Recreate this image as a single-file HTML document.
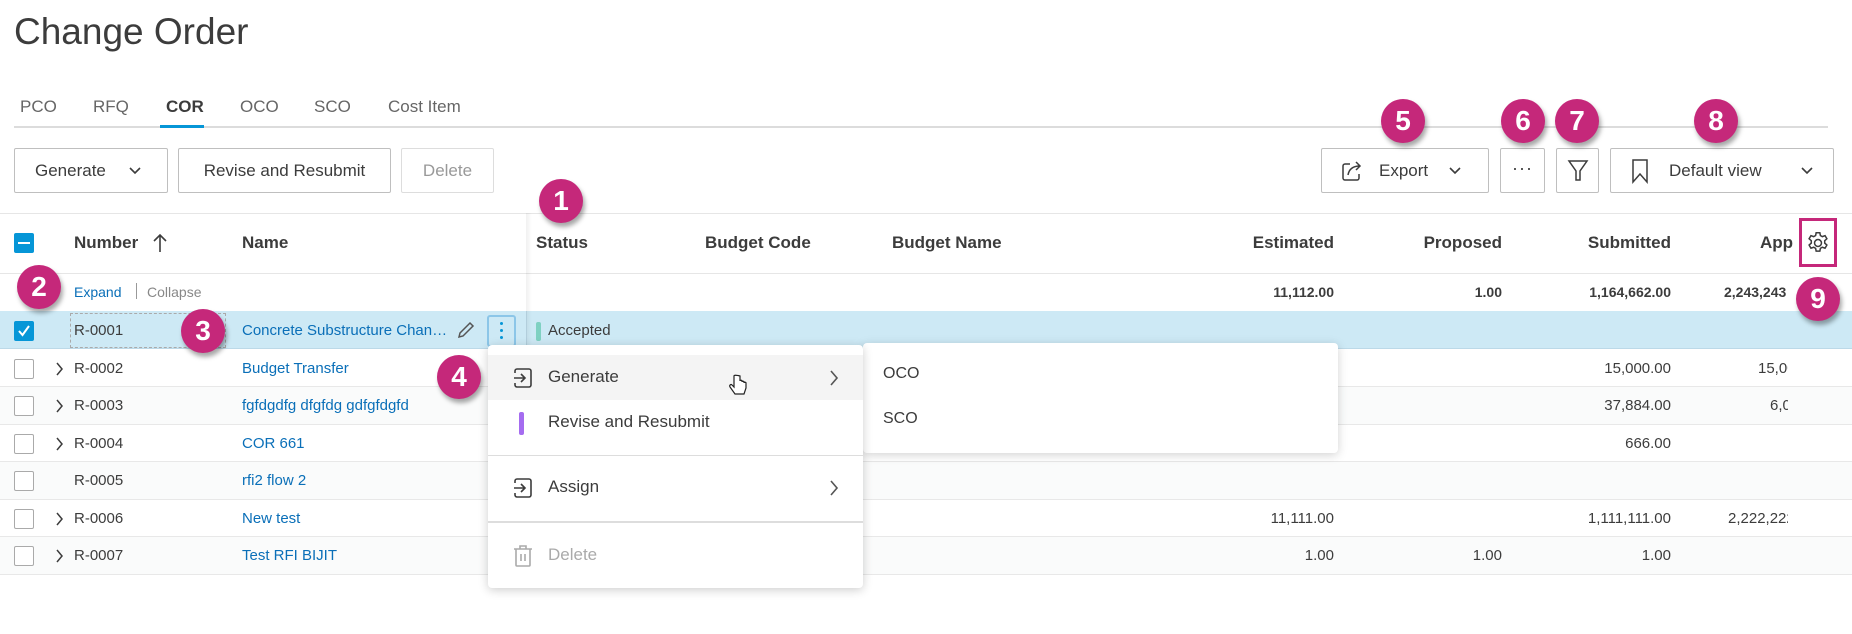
<!DOCTYPE html>
<html><head><meta charset="utf-8"><style>
*{box-sizing:border-box;margin:0;padding:0}
body{width:1852px;height:634px;overflow:hidden;background:#fff;font-family:"Liberation Sans",sans-serif;color:#3c3c3c;position:relative;font-size:15px}
.a{position:absolute;white-space:nowrap}
.btn{position:absolute;border:1px solid #bfbfbf;border-radius:2px;height:45px;top:148px;background:#fff;display:flex;align-items:center;font-size:17px;color:#3c3c3c}
.badge{position:absolute;width:44px;height:44px;border-radius:50%;background:#c5287a;color:#fff;font-size:28px;font-weight:bold;text-align:center;line-height:44px;box-shadow:2px 4px 5px rgba(0,0,0,.35);z-index:20}
.hd{position:absolute;top:233px;font-weight:bold;font-size:17px;color:#3c3c3c}
.r{text-align:right}
.cb{position:absolute;left:14px;width:20px;height:20px;border:1px solid #aaa;border-radius:2px;background:#fff}
.row{position:absolute;left:0;width:1852px;height:38px;border-bottom:1px solid #e8e8e8}
.num{position:absolute;font-size:15px;color:#3c3c3c}
.lnk{color:#0a6fb8}
.chev{position:absolute;left:56px;width:8px;height:14px}
</style></head><body>
<div class="a" style="left:14px;top:11px;font-size:37px;color:#3c3c3c">Change Order</div>
<div class="a" style="left:20px;top:97px;font-size:17px;color:#666">PCO</div>
<div class="a" style="left:93px;top:97px;font-size:17px;color:#666">RFQ</div>
<div class="a" style="left:166px;top:97px;font-size:17px;color:#3c3c3c;font-weight:bold">COR</div>
<div class="a" style="left:240px;top:97px;font-size:17px;color:#666">OCO</div>
<div class="a" style="left:314px;top:97px;font-size:17px;color:#666">SCO</div>
<div class="a" style="left:388px;top:97px;font-size:17px;color:#666">Cost Item</div>
<div class="a" style="left:14px;top:126px;width:1814px;height:2px;background:#dcdcdc"></div>
<div class="a" style="left:160px;top:125px;width:44px;height:3px;background:#0696d7"></div>

<div class="btn" style="left:14px;width:154px;padding-left:20px">Generate<svg style="margin-left:22px" width="14" height="10" viewBox="0 0 14 10"><path d="M2 2l5 5 5-5" fill="none" stroke="#3c3c3c" stroke-width="1.6"/></svg></div>
<div class="btn" style="left:178px;width:213px;justify-content:center">Revise and Resubmit</div>
<div class="btn" style="left:401px;width:93px;justify-content:center;border-color:#ddd;color:#999">Delete</div>
<div class="btn" style="left:1321px;width:168px;padding-left:18px"><svg width="24" height="24" viewBox="0 0 24 24" fill="none" stroke="#3c3c3c" stroke-width="1.5"><path d="M10 5H5a2 2 0 0 0-2 2v12a2 2 0 0 0 2 2h12a2 2 0 0 0 2-2v-4"/><path d="M8 16c1-6 5-9 12-9M16 3l4 4-4 4"/></svg><span style="margin-left:15px">Export</span><svg style="margin-left:20px" width="14" height="10" viewBox="0 0 14 10"><path d="M2 2l5 5 5-5" fill="none" stroke="#3c3c3c" stroke-width="1.6"/></svg></div>
<div class="btn" style="left:1500px;width:45px;justify-content:center;font-size:18px;letter-spacing:1px;padding-bottom:4px">···</div>
<div class="btn" style="left:1556px;width:43px;justify-content:center"><svg width="22" height="26" viewBox="0 0 22 26"><path d="M2 3h18l-7 10v9h-4v-9z" fill="none" stroke="#3c3c3c" stroke-width="1.5"/></svg></div>
<div class="btn" style="left:1610px;width:224px;padding-left:20px"><svg width="18" height="26" viewBox="0 0 18 26"><path d="M2 2h14v22l-7-8-7 8z" fill="none" stroke="#3c3c3c" stroke-width="1.5"/></svg><span style="margin-left:20px">Default view</span><svg style="margin-left:38px" width="14" height="10" viewBox="0 0 14 10"><path d="M2 2l5 5 5-5" fill="none" stroke="#3c3c3c" stroke-width="1.6"/></svg></div>

<div class="a" style="left:0;top:213px;width:1852px;height:1px;background:#e6e6e6"></div>
<div class="a" style="left:0;top:273px;width:1852px;height:1px;background:#e6e6e6"></div>
<div class="a" style="left:0;top:311px;width:1852px;height:1px;background:#e6e6e6"></div>
<div class="a" style="left:14px;top:233px;width:20px;height:20px;background:#0696d7;border-radius:2px"><div style="position:absolute;left:4px;top:9px;width:12px;height:2px;background:#fff"></div></div>
<div class="hd" style="left:74px">Number</div>
<svg class="a" style="left:151px;top:232px" width="18" height="22" viewBox="0 0 18 22"><path d="M9 20V3M3 9l6-6 6 6" fill="none" stroke="#3c3c3c" stroke-width="1.6"/></svg>
<div class="hd" style="left:242px">Name</div>
<div class="hd" style="left:536px">Status</div>
<div class="hd" style="left:705px">Budget Code</div>
<div class="hd" style="left:892px">Budget Name</div>
<div class="hd r" style="left:1200px;width:134px">Estimated</div>
<div class="hd r" style="left:1370px;width:132px">Proposed</div>
<div class="hd r" style="left:1540px;width:131px">Submitted</div>
<div class="hd" style="left:1760px;width:35px;overflow:hidden">App</div>
<div class="a" style="left:1799px;top:218px;width:38px;height:49px;border:3px solid #c5287a"></div>
<svg class="a" style="left:1805px;top:230px" width="26" height="26" viewBox="0 0 24 24" fill="none" stroke="#3c3c3c" stroke-width="1.4"><circle cx="12" cy="12" r="3.2"/><path d="M10.3 2.5h3.4l.5 2.6 1.8 1 2.5-.9 1.7 2.9-2 1.8v2.2l2 1.8-1.7 2.9-2.5-.9-1.8 1-.5 2.6h-3.4l-.5-2.6-1.8-1-2.5.9-1.7-2.9 2-1.8v-2.2l-2-1.8 1.7-2.9 2.5.9 1.8-1z"/></svg>

<div class="a lnk" style="left:74px;top:284px;font-size:14px">Expand</div>
<div class="a" style="left:136px;top:283px;width:1px;height:16px;background:#999"></div>
<div class="a" style="left:147px;top:284px;font-size:14px;color:#888">Collapse</div>
<div class="num r" style="left:1200px;width:134px;top:284px;font-weight:bold;font-size:14px">11,112.00</div>
<div class="num r" style="left:1370px;width:132px;top:284px;font-weight:bold;font-size:14px">1.00</div>
<div class="num r" style="left:1540px;width:131px;top:284px;font-weight:bold;font-size:14px">1,164,662.00</div>
<div class="num" style="left:1724px;width:64px;overflow:hidden;top:284px;font-weight:bold;font-size:14px">2,243,243</div>

<div class="row" style="top:311px;background:#cde9f5;border-bottom-color:#bcd9e8"></div>
<div class="a" style="left:14px;top:321px;width:20px;height:20px;background:#0696d7;border-radius:2px"><svg width="20" height="20" viewBox="0 0 20 20"><path d="M5 10l3.5 4L15 5" fill="none" stroke="#fff" stroke-width="2"/></svg></div>
<div class="a" style="left:70px;top:313px;width:156px;height:35px;border:1px dashed #aaa"></div>
<div class="num" style="left:74px;top:322px">R-0001</div>
<div class="num lnk" style="left:242px;top:322px">Concrete Substructure Chan…</div>
<svg class="a" style="left:455px;top:319px" width="22" height="22" viewBox="0 0 22 22"><path d="M4 18l1-4L15 4l3 3L8 17z" fill="none" stroke="#555" stroke-width="1.5"/></svg>
<div class="a" style="left:487px;top:315px;width:29px;height:32px;border:2px solid #8cc6e8;border-radius:3px"><div style="position:absolute;left:11px;top:5px;width:3px;height:3px;background:#0696d7;border-radius:50%;box-shadow:0 7px 0 #0696d7,0 14px 0 #0696d7"></div></div>
<div class="a" style="left:526px;top:311px;width:1px;height:38px;background:#bcd9e8"></div>
<div class="a" style="left:536px;top:322px;width:5px;height:19px;background:#7fd1c2;border-radius:2px"></div>
<div class="num" style="left:548px;top:322px">Accepted</div>

<div class="row" style="top:349px"></div>
<div class="row" style="top:387px;background:#fafbfb"></div>
<div class="row" style="top:424px"></div>
<div class="row" style="top:462px;background:#fafbfb"></div>
<div class="row" style="top:499px"></div>
<div class="row" style="top:537px;background:#fafbfb"></div>
<div class="a" style="left:526px;top:213px;width:6px;height:361px;background:linear-gradient(90deg,rgba(0,0,0,.06),rgba(0,0,0,0))"></div>

<div class="cb" style="top:359px"></div><svg class="chev" style="top:362px" viewBox="0 0 8 14"><path d="M1 1l5 6-5 6" fill="none" stroke="#3c3c3c" stroke-width="1.5"/></svg><div class="num" style="left:74px;top:360px">R-0002</div><div class="num lnk" style="left:242px;top:360px">Budget Transfer</div>
<div class="cb" style="top:396px"></div><svg class="chev" style="top:399px" viewBox="0 0 8 14"><path d="M1 1l5 6-5 6" fill="none" stroke="#3c3c3c" stroke-width="1.5"/></svg><div class="num" style="left:74px;top:397px">R-0003</div><div class="num lnk" style="left:242px;top:397px">fgfdgdfg dfgfdg gdfgfdgfd</div>
<div class="cb" style="top:434px"></div><svg class="chev" style="top:437px" viewBox="0 0 8 14"><path d="M1 1l5 6-5 6" fill="none" stroke="#3c3c3c" stroke-width="1.5"/></svg><div class="num" style="left:74px;top:435px">R-0004</div><div class="num lnk" style="left:242px;top:435px">COR 661</div>
<div class="cb" style="top:471px"></div><div class="num" style="left:74px;top:472px">R-0005</div><div class="num lnk" style="left:242px;top:472px">rfi2 flow 2</div>
<div class="cb" style="top:509px"></div><svg class="chev" style="top:512px" viewBox="0 0 8 14"><path d="M1 1l5 6-5 6" fill="none" stroke="#3c3c3c" stroke-width="1.5"/></svg><div class="num" style="left:74px;top:510px">R-0006</div><div class="num lnk" style="left:242px;top:510px">New test</div>
<div class="cb" style="top:546px"></div><svg class="chev" style="top:549px" viewBox="0 0 8 14"><path d="M1 1l5 6-5 6" fill="none" stroke="#3c3c3c" stroke-width="1.5"/></svg><div class="num" style="left:74px;top:547px">R-0007</div><div class="num lnk" style="left:242px;top:547px">Test RFI BIJIT</div>

<div class="num r" style="left:1540px;width:131px;top:360px">15,000.00</div>
<div class="num" style="left:1758px;width:30px;overflow:hidden;top:360px">15,000.00</div>
<div class="num r" style="left:1540px;width:131px;top:397px">37,884.00</div>
<div class="num" style="left:1770px;width:18px;overflow:hidden;top:397px">6,000</div>
<div class="num r" style="left:1540px;width:131px;top:435px">666.00</div>
<div class="num r" style="left:1200px;width:134px;top:510px">11,111.00</div>
<div class="num r" style="left:1540px;width:131px;top:510px">1,111,111.00</div>
<div class="num" style="left:1728px;width:60px;overflow:hidden;top:510px">2,222,222</div>
<div class="num r" style="left:1200px;width:134px;top:547px">1.00</div>
<div class="num r" style="left:1370px;width:132px;top:547px">1.00</div>
<div class="num r" style="left:1540px;width:131px;top:547px">1.00</div>

<div class="a" style="left:863px;top:343px;width:475px;height:110px;background:#fff;border-radius:4px;box-shadow:0 2px 10px rgba(0,0,0,.18);z-index:5">
<div class="a" style="left:20px;top:22px;font-size:16px">OCO</div>
<div class="a" style="left:20px;top:67px;font-size:16px">SCO</div></div>
<div class="a" style="left:488px;top:345px;width:375px;height:243px;background:#fff;border-radius:4px;box-shadow:0 2px 10px rgba(0,0,0,.2);z-index:6;font-size:17px">
<div class="a" style="left:0;top:10px;width:375px;height:45px;background:#f4f4f4"></div>
<svg class="a" style="left:24px;top:22px" width="22" height="22" viewBox="0 0 22 22" fill="none" stroke="#3c3c3c" stroke-width="1.6"><path d="M3 6V4a2 2 0 0 1 2-2h12a2 2 0 0 1 2 2v14a2 2 0 0 1-2 2H5a2 2 0 0 1-2-2v-2M2 11h11M9 7l4 4-4 4"/></svg>
<div class="a" style="left:60px;top:22px">Generate</div>
<svg class="a" style="left:340px;top:24px" width="12" height="18" viewBox="0 0 12 18"><path d="M3 2l6 7-6 7" fill="none" stroke="#555" stroke-width="1.6"/></svg>
<div class="a" style="left:31px;top:67px;width:5px;height:23px;background:#a56cf0;border-radius:2px"></div>
<div class="a" style="left:60px;top:67px">Revise and Resubmit</div>
<div class="a" style="left:0;top:110px;width:375px;height:1px;background:#ddd"></div>
<svg class="a" style="left:24px;top:132px" width="22" height="22" viewBox="0 0 22 22" fill="none" stroke="#3c3c3c" stroke-width="1.6"><path d="M3 6V4a2 2 0 0 1 2-2h12a2 2 0 0 1 2 2v14a2 2 0 0 1-2 2H5a2 2 0 0 1-2-2v-2M2 11h11M9 7l4 4-4 4"/></svg>
<div class="a" style="left:60px;top:132px">Assign</div>
<svg class="a" style="left:340px;top:134px" width="12" height="18" viewBox="0 0 12 18"><path d="M3 2l6 7-6 7" fill="none" stroke="#555" stroke-width="1.6"/></svg>
<div class="a" style="left:0;top:176px;width:375px;height:2px;background:#ddd"></div>
<svg class="a" style="left:24px;top:199px" width="22" height="24" viewBox="0 0 22 24" fill="none" stroke="#aaa" stroke-width="1.6"><path d="M2 5h18M8 5V2h6v3M4 5v16a1 1 0 0 0 1 1h12a1 1 0 0 0 1-1V5M9 10v7M13 10v7"/></svg>
<div class="a" style="left:60px;top:200px;color:#aaa">Delete</div>
</div>
<svg class="a" style="left:728px;top:374px;z-index:7" width="20" height="24" viewBox="0 0 20 24"><path d="M6 2v11l-2-2c-1-1-3 0-2 2l5 7h9l2-6V9c0-1-2-1-2 0V8c0-1-2-1-2 0V7c0-1-2-1-2 0V2C8 1 6 1 6 2z" fill="#fff" stroke="#222" stroke-width="1.2"/></svg>

<div class="badge" style="left:539px;top:179px">1</div>
<div class="badge" style="left:17px;top:265px">2</div>
<div class="badge" style="left:181px;top:309px">3</div>
<div class="badge" style="left:437px;top:355px">4</div>
<div class="badge" style="left:1381px;top:99px">5</div>
<div class="badge" style="left:1501px;top:99px">6</div>
<div class="badge" style="left:1555px;top:99px">7</div>
<div class="badge" style="left:1694px;top:99px">8</div>
<div class="badge" style="left:1796px;top:277px">9</div>
</body></html>
